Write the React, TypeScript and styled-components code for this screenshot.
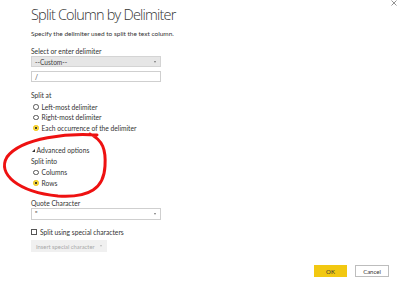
import React from "react";
import styled, { createGlobalStyle } from "styled-components";

const Global = createGlobalStyle`
  html, body { margin: 0; padding: 0; background: #fff; }
  body { font-family: Lato, "Open Sans", sans-serif; color: #333; }
`;

const Page = styled.div`
  position: relative;
  width: 400px;
  height: 293px;
  overflow: hidden;
  background: #fff;
  display: flex;
  flex-direction: column;
`;

const Header = styled.div`
  display: flex;
  justify-content: space-between;
  align-items: flex-start;
  padding: 0 3px 0 31px;
`;

const Title = styled.h1`
  margin: 6px 0 0;
  font-family: "Open Sans", sans-serif;
  font-size: 14.5px;
  font-weight: 300;
  line-height: 18px;
  color: #333;
  letter-spacing: -0.8px;
`;

const Close = styled.div`
  width: 6px;
  height: 6px;
  display: flex;
`;

const Body = styled.div`
  display: flex;
  flex-direction: column;
  padding-left: 31px;
`;

const Text = styled.div<{ $mt?: number; $h?: number }>`
  margin-top: ${(p) => p.$mt ?? 0}px;
  height: ${(p) => p.$h ?? 10}px;
  line-height: ${(p) => p.$h ?? 10}px;
  font-size: 6.7px;
  color: #333;
  white-space: nowrap;
  display: flex;
  align-items: center;
`;

const Subtitle = styled(Text)`
  font-size: 6.5px;
`;

const Select = styled.div<{ $mt?: number; $h?: number; $gray?: boolean }>`
  margin-top: ${(p) => p.$mt ?? 0}px;
  box-sizing: border-box;
  width: 130px;
  height: ${(p) => p.$h ?? 11}px;
  border: 1px solid ${(p) => (p.$gray ? "#d4d4d4" : "#cfcfcf")};
  background: ${(p) => (p.$gray ? "#e6e6e6" : "#fff")};
  display: flex;
  align-items: center;
  justify-content: space-between;
  padding: 0 4px 0 3px;
  font-size: 6.6px;
  color: #444;
`;

const Caret = styled.span`
  width: 0;
  height: 0;
  border-left: 1.5px solid transparent;
  border-right: 1.5px solid transparent;
  border-top: 2px solid #777;
`;

const RadioRow = styled.div<{ $mt?: number }>`
  margin-top: ${(p) => p.$mt ?? 0}px;
  height: 10.5px;
  display: flex;
  align-items: center;
  gap: 3px;
  padding-left: 2px;
  font-size: 6.7px;
  color: #333;
  white-space: nowrap;
`;

const RadioDot = styled.span<{ $on?: boolean }>`
  box-sizing: border-box;
  width: 5.5px;
  height: 5.5px;
  border-radius: 50%;
  border: 1px solid ${(p) => (p.$on ? "#f2c811" : "#555")};
  background: ${(p) => (p.$on ? "#f6d84a" : "#fff")};
  display: flex;
  align-items: center;
  justify-content: center;
  &::after {
    content: "";
    display: ${(p) => (p.$on ? "block" : "none")};
    width: 1.6px;
    height: 1.6px;
    border-radius: 50%;
    background: #222;
  }
`;

const Expander = styled.div<{ $mt?: number }>`
  margin-top: ${(p) => p.$mt ?? 0}px;
  height: 10.5px;
  display: flex;
  align-items: center;
  gap: 1.5px;
  padding-left: 1px;
  font-size: 6.7px;
  color: #333;
`;

const Tri = styled.span`
  width: 0;
  height: 0;
  border-left: 3px solid transparent;
  border-bottom: 3px solid #333;
  margin-top: 1px;
`;

const CheckRow = styled.div<{ $mt?: number }>`
  margin-top: ${(p) => p.$mt ?? 0}px;
  height: 10.5px;
  display: flex;
  align-items: center;
  gap: 3px;
  font-size: 6.7px;
  color: #333;
  white-space: nowrap;
`;

const Box = styled.span`
  box-sizing: border-box;
  width: 6px;
  height: 6px;
  border: 1px solid #555;
  background: #fff;
`;

const InsertBtn = styled.div<{ $mt?: number }>`
  margin-top: ${(p) => p.$mt ?? 0}px;
  width: 76px;
  height: 12px;
  box-sizing: border-box;
  background: #f0f0f0;
  display: flex;
  align-items: center;
  justify-content: space-between;
  padding: 0 5px 0 5px;
  font-size: 5.8px;
  color: #a8a8a8;
  white-space: nowrap;
`;

const GrayCaret = styled(Caret)`
  border-top-color: #bbb;
`;

const Footer = styled.div`
  margin-top: 13px;
  display: flex;
  justify-content: flex-end;
  gap: 8px;
  padding-right: 11px;
`;

const Button = styled.div<{ $primary?: boolean }>`
  box-sizing: border-box;
  width: ${(p) => (p.$primary ? 33 : 34)}px;
  height: 12px;
  display: flex;
  align-items: center;
  justify-content: center;
  font-size: 6px;
  color: #333;
  background: ${(p) => (p.$primary ? "#f2c811" : "#fff")};
  border: 1px solid ${(p) => (p.$primary ? "#f2c811" : "#bdbdbd")};
`;

const Annotation = styled.svg`
  position: absolute;
  left: 0;
  top: 0;
  pointer-events: none;
`;

export default function App() {
  return (
    <>
      <Global />
      <Page>
        <Header>
          <Title>Split Column by Delimiter</Title>
          <Close>
            <svg width="6" height="6" viewBox="0 0 6 6">
              <path d="M0.5 0.5 L5.5 5.5 M5.5 0.5 L0.5 5.5" stroke="#888" strokeWidth="0.9" />
            </svg>
          </Close>
        </Header>
        <Body>
          <Subtitle $mt={5}>Specify the delimiter used to split the text column.</Subtitle>
          <Text $mt={7}>Select or enter delimiter</Text>
          <Select $gray $h={11}>
            <span>--Custom--</span>
            <Caret />
          </Select>
          <Select $mt={4} $h={11}>
            <span>/</span>
          </Select>
          <Text $mt={8}>Split at</Text>
          <RadioRow $mt={1.5}>
            <RadioDot />
            Left-most delimiter
          </RadioRow>
          <RadioRow>
            <RadioDot />
            Right-most delimiter
          </RadioRow>
          <RadioRow>
            <RadioDot $on />
            Each occurrence of the delimiter
          </RadioRow>
          <Expander $mt={12}>
            <Tri />
            Advanced options
          </Expander>
          <Text $h={10.5}>Split into</Text>
          <RadioRow $mt={1}>
            <RadioDot />
            Columns
          </RadioRow>
          <RadioRow>
            <RadioDot $on />
            Rows
          </RadioRow>
          <Text $mt={9.5} $h={10.5}>Quote Character</Text>
          <Select $h={12}>
            <span>"</span>
            <Caret />
          </Select>
          <CheckRow $mt={6.5}>
            <Box />
            Split using special characters
          </CheckRow>
          <InsertBtn $mt={3}>
            <span>Insert special character</span>
            <GrayCaret />
          </InsertBtn>
        </Body>
        <Footer>
          <Button $primary>OK</Button>
          <Button>Cancel</Button>
        </Footer>
        <Annotation width="400" height="293" viewBox="0 0 400 293">
          <path
            d="M 97 135 C 70 133, 22 137, 7 157 C -3 174, 18 192, 58 196 C 90 198, 104 188, 105 166 C 106 150, 103 140, 90 134"
            fill="none"
            stroke="#ee1111"
            strokeWidth="3"
            strokeLinecap="round"
          />
        </Annotation>
      </Page>
    </>
  );
}
